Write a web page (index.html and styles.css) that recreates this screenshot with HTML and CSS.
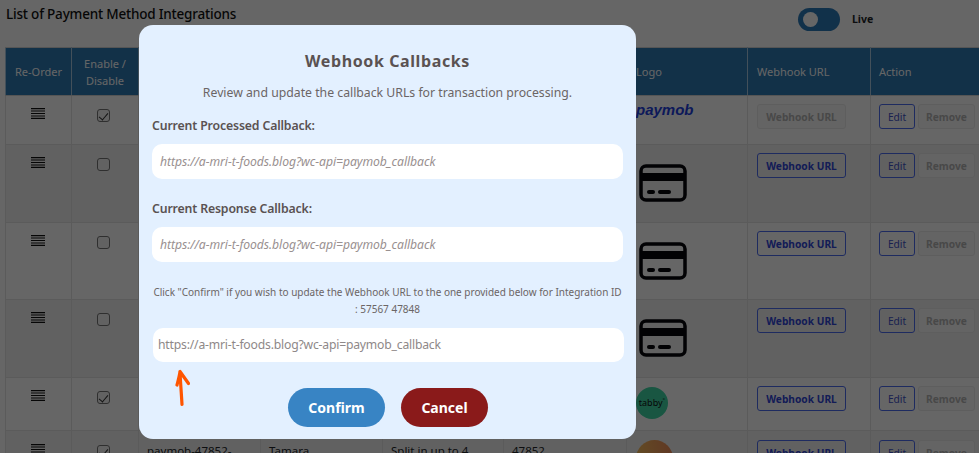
FILE: index.html
```html
<!DOCTYPE html>
<html lang="en">
<head>
    <meta charset="UTF-8">
    <title>Payment Method Integrations</title>
    <link rel="stylesheet" href="styles.css">
</head>
<body>
<section class="page">
    <div class="top-bar">
        <h1>List of Payment Method Integrations</h1>
        <div class="live-switch">
            <span class="switch"><span class="knob"></span></span>
            <span class="live-label">Live</span>
        </div>
    </div>

    <table class="methods">
        <colgroup>
            <col class="c-order"><col class="c-enable"><col class="c-name"><col class="c-title"><col class="c-desc"><col class="c-id"><col class="c-logo"><col class="c-hook"><col class="c-action">
        </colgroup>
        <thead>
            <tr>
                <th class="center">Re-Order</th>
                <th class="center">Enable / Disable</th>
                <th></th>
                <th></th>
                <th></th>
                <th></th>
                <th>Logo</th>
                <th>Webhook URL</th>
                <th>Action</th>
            </tr>
        </thead>
        <tbody>
            <tr class="row-a">
                <td class="center"><svg class="burger" viewBox="0 0 14 11"><path d="M0 .6H14M0 3H14M0 5.500H14M0 8H14M0 10.400H14" stroke="#111" stroke-width="1.200"/></svg></td>
                <td class="center"><span class="check on"></span></td>
                <td></td><td></td><td></td><td></td>
                <td><span class="paymob">paymob</span></td>
                <td><button class="btn hook off">Webhook URL</button></td>
                <td class="actions"><button class="btn edit">Edit</button><button class="btn remove">Remove</button></td>
            </tr>
            <tr class="row-b">
                <td class="center"><svg class="burger" viewBox="0 0 14 11"><path d="M0 .6H14M0 3H14M0 5.500H14M0 8H14M0 10.400H14" stroke="#111" stroke-width="1.200"/></svg></td>
                <td class="center"><span class="check"></span></td>
                <td></td><td></td><td></td><td></td>
                <td><svg class="card" viewBox="0 0 48 38"><rect x="2" y="2" width="44" height="34" rx="5" fill="none" stroke="#05060c" stroke-width="3.500"/><rect x="3" y="9" width="42" height="8" fill="#05060c"/><rect x="8" y="26" width="8" height="4" rx="2" fill="#05060c"/><rect x="19" y="26" width="13" height="4" rx="2" fill="#05060c"/></svg></td>
                <td><button class="btn hook">Webhook URL</button></td>
                <td class="actions"><button class="btn edit">Edit</button><button class="btn remove">Remove</button></td>
            </tr>
            <tr class="row-c">
                <td class="center"><svg class="burger" viewBox="0 0 14 11"><path d="M0 .6H14M0 3H14M0 5.500H14M0 8H14M0 10.400H14" stroke="#111" stroke-width="1.200"/></svg></td>
                <td class="center"><span class="check"></span></td>
                <td></td><td></td><td></td><td></td>
                <td><svg class="card" viewBox="0 0 48 38"><rect x="2" y="2" width="44" height="34" rx="5" fill="none" stroke="#05060c" stroke-width="3.500"/><rect x="3" y="9" width="42" height="8" fill="#05060c"/><rect x="8" y="26" width="8" height="4" rx="2" fill="#05060c"/><rect x="19" y="26" width="13" height="4" rx="2" fill="#05060c"/></svg></td>
                <td><button class="btn hook">Webhook URL</button></td>
                <td class="actions"><button class="btn edit">Edit</button><button class="btn remove">Remove</button></td>
            </tr>
            <tr class="row-d">
                <td class="center"><svg class="burger" viewBox="0 0 14 11"><path d="M0 .6H14M0 3H14M0 5.500H14M0 8H14M0 10.400H14" stroke="#111" stroke-width="1.200"/></svg></td>
                <td class="center"><span class="check"></span></td>
                <td></td><td></td><td></td><td></td>
                <td><svg class="card" viewBox="0 0 48 38"><rect x="2" y="2" width="44" height="34" rx="5" fill="none" stroke="#05060c" stroke-width="3.500"/><rect x="3" y="9" width="42" height="8" fill="#05060c"/><rect x="8" y="26" width="8" height="4" rx="2" fill="#05060c"/><rect x="19" y="26" width="13" height="4" rx="2" fill="#05060c"/></svg></td>
                <td><button class="btn hook">Webhook URL</button></td>
                <td class="actions"><button class="btn edit">Edit</button><button class="btn remove">Remove</button></td>
            </tr>
            <tr class="row-e">
                <td class="center"><svg class="burger" viewBox="0 0 14 11"><path d="M0 .6H14M0 3H14M0 5.500H14M0 8H14M0 10.400H14" stroke="#111" stroke-width="1.200"/></svg></td>
                <td class="center"><span class="check on"></span></td>
                <td></td><td></td><td></td><td></td>
                <td><span class="tabby">tabby<sup>°</sup></span></td>
                <td><button class="btn hook">Webhook URL</button></td>
                <td class="actions"><button class="btn edit">Edit</button><button class="btn remove">Remove</button></td>
            </tr>
            <tr class="row-f">
                <td class="center"><svg class="burger" viewBox="0 0 14 11"><path d="M0 .6H14M0 3H14M0 5.500H14M0 8H14M0 10.400H14" stroke="#111" stroke-width="1.200"/></svg></td>
                <td class="center"><span class="check on"></span></td>
                <td><span class="cell-text">paymob-47852-</span></td>
                <td><span class="cell-text">Tamara</span></td>
                <td><span class="cell-text">Split in up to 4</span></td>
                <td><span class="cell-text">47852</span></td>
                <td><span class="tamara"></span></td>
                <td><button class="btn hook">Webhook URL</button></td>
                <td class="actions"><button class="btn edit">Edit</button><button class="btn remove">Remove</button></td>
            </tr>
        </tbody>
    </table>
</section>

<div class="overlay">
    <div class="modal">
        <h2>Webhook Callbacks</h2>
        <p class="intro">Review and update the callback URLs for transaction processing.</p>

        <label class="field-label">Current Processed Callback:</label>
        <div class="url-box current">https://a-mri-t-foods.blog?wc-api=paymob_callback</div>

        <label class="field-label second">Current Response Callback:</label>
        <div class="url-box current">https://a-mri-t-foods.blog?wc-api=paymob_callback</div>

        <p class="note">Click "Confirm" if you wish to update the Webhook URL to the one provided below for Integration ID : 57567 47848</p>

        <div class="url-box new">https://a-mri-t-foods.blog?wc-api=paymob_callback</div>

        <div class="modal-actions">
            <button class="pill confirm">Confirm</button>
            <button class="pill cancel">Cancel</button>
        </div>

        <svg class="arrow" viewBox="0 0 16 38"><path d="M8 35.500C7.500 26 6.500 14 6 2.500M6 2.500C5.500 7 4 12 3 16M6 2.500C8.500 6 12 11 14.500 14.500" fill="none" stroke="#ff5500" stroke-width="3.200" stroke-linecap="round"/></svg>
    </div>
</div>
</body>
</html>
```

FILE: styles.css
```css
* {
    padding: 0;
    margin: 0;
    box-sizing: border-box;
}
html, body {
    height: 100%;
    overflow: hidden;
}
body {
    font-family: "Noto Sans", "Open Sans", sans-serif;
    background-color: white;
    color: #212529;
}
.page {
    padding: 0 0 0 5px;
}

/* top bar */
.top-bar {
    display: flex;
    align-items: flex-start;
    height: 47px;
}
.top-bar h1 {
    font-size: 13.500px;
    font-weight: 500;
    letter-spacing: -0.2px;
    line-height: 20px;
    margin: 4px 0 0 1px;
    width: 792px;
    color: #111;
}
.live-switch {
    display: flex;
    align-items: center;
    gap: 12px;
    margin-top: 8px;
}
.switch {
    display: block;
    width: 42px;
    height: 23px;
    border-radius: 12px;
    background-color: #2c7ab8;
    padding: 4px 0 0 5px;
}
.knob {
    display: block;
    width: 15px;
    height: 15px;
    border-radius: 50%;
    background-color: white;
}
.live-label {
    font-size: 10.500px;
    font-weight: 700;
    margin-top: -2px;
}

/* table */
.methods {
    table-layout: fixed;
    border-collapse: collapse;
    width: 974px;
    font-size: 11.500px;
}
.c-order { width: 66px; }
.c-enable { width: 67px; }
.c-name { width: 122px; }
.c-title { width: 122px; }
.c-desc { width: 121px; }
.c-id { width: 123px; }
.c-logo { width: 121px; }
.c-hook { width: 123px; }
.c-action { width: 109px; }
.methods th {
    height: 48px;
    background-color: #2d7ab5;
    color: white;
    font-weight: 400;
    font-size: 11px;
    line-height: 17px;
    text-align: left;
    padding: 0 9px;
    border: 1px solid #a9c9e0;
    border-top-color: #d5d5d5;
    border-bottom-color: #d5d5d5;
}
.methods th:last-child {
    padding-left: 8px;
}
.methods th.center {
    padding: 0 4px;
}
.methods td {
    vertical-align: top;
    padding: 8px 9px 0 8px;
    border: 1px solid #e4e4e4;
    background-color: white;
}
.methods th.center,
.methods td.center {
    text-align: center;
}
.methods td.actions {
    padding-left: 8px;
    padding-right: 0;
    white-space: nowrap;
}
.row-a td { height: 49px; }
.row-b td { height: 78px; }
.row-c td { height: 77px; }
.row-d td { height: 78px; }
.row-e td { height: 53px; }
.row-f td { height: 60px; }
.row-f td {
    padding-top: 9px;
}
.row-b td, .row-d td, .row-f td {
    background-color: #f2f2f2;
}
.cell-text {
    display: block;
    margin-top: 3px;
}
.burger {
    display: inline-block;
    vertical-align: top;
    width: 14px;
    height: 11px;
    margin-top: 4px;
}
.check {
    display: inline-block;
    vertical-align: top;
    width: 13px;
    height: 13px;
    margin-top: 5px;
    margin-right: 3px;
    border: 1px solid #767676;
    border-radius: 3px;
    background-color: #f5f5f5;
    position: relative;
}
.check.on::after {
    content: "";
    position: absolute;
    left: 3.500px;
    top: 1px;
    width: 4px;
    height: 8px;
    border: solid #333;
    border-width: 0 1.500px 1.500px 0;
    transform: rotate(40deg);
}
.card {
    display: block;
    width: 48px;
    height: 38px;
    margin: 11px 0 0 4px;
}
.paymob {
    display: block;
    margin: -1px 0 0 1px;
    font-family: "Liberation Sans", sans-serif;
    font-weight: 700;
    font-style: italic;
    font-size: 15px;
    line-height: 14px;
    color: #1e3fe0;
}
.tabby {
    display: block;
    width: 32px;
    height: 32px;
    margin: 1px 0 0 1px;
    border-radius: 50%;
    background-color: #3fd6a6;
    color: #111;
    font-size: 9px;
    line-height: 32px;
    text-align: center;
}
.tabby sup {
    font-size: 6px;
    line-height: 0;
}
.tamara {
    display: block;
    width: 37px;
    height: 37px;
    margin-left: 1px;
    border-radius: 50%;
    background-image: linear-gradient(80deg, #f7c25a, #f08a5a);
}
.btn {
    font-family: "Noto Sans", sans-serif;
    font-size: 10.200px;
    height: 25px;
    border-radius: 3px;
    background-color: transparent;
    cursor: pointer;
    vertical-align: top;
}
.hook {
    width: 89px;
    margin-left: 1px;
    font-weight: 700;
    color: #3047d8;
    border: 1px solid #4c6cf0;
}
.hook.off {
    color: #b5b5b5;
    background-color: #fafafa;
    border-color: #eaeaea;
}
.edit {
    width: 36px;
    color: #3f52c8;
    border: 1px solid #4c6cf0;
}
.remove {
    width: 57px;
    margin-left: 3px;
    font-weight: 700;
    color: #b5b5b5;
    background-color: #fafafa;
    border: 1px solid #eaeaea;
}

/* popup */
.overlay {
    position: fixed;
    top: 0;
    left: 0;
    right: 0;
    bottom: 0;
    background-color: rgba(0, 0, 0, 0.6);
    padding: 25px 0 0 139px;
}
.modal {
    position: relative;
    width: 497px;
    height: 414px;
    padding: 25px 13px 0;
    background-color: #e3f0ff;
    border-radius: 14px;
    color: #5a5252;
}
.modal h2 {
    font-size: 16px;
    font-weight: 700;
    letter-spacing: 0.6px;
    line-height: 22px;
    text-align: center;
}
.intro {
    font-size: 12.250px;
    line-height: 18px;
    margin-top: 12px;
    text-align: center;
    color: #6b6565;
}
.field-label {
    display: block;
    font-size: 12.300px;
    font-weight: 600;
    letter-spacing: -0.15px;
    line-height: 18px;
    margin-top: 15px;
}
.field-label.second {
    margin-top: 21px;
}
.url-box {
    height: 35px;
    line-height: 35px;
    background-color: white;
    border-radius: 10px;
    padding-left: 8px;
    font-size: 12.200px;
    letter-spacing: -0.06px;
    color: #999090;
    margin-top: 9px;
}
.url-box.current {
    font-style: italic;
}
.url-box.new {
    height: 34px;
    line-height: 34px;
    margin: 10px -1px 0 1px;
    padding-left: 5px;
    letter-spacing: -0.2px;
    color: #8e8888;
}
.note {
    font-size: 10px;
    line-height: 17px;
    margin-top: 22px;
    text-align: center;
    color: #6b6565;
}
.modal-actions {
    display: flex;
    justify-content: center;
    gap: 16px;
    margin-top: 26px;
    padding-left: 1px;
}
.pill {
    height: 39px;
    border: none;
    border-radius: 20px;
    color: white;
    font-family: "Noto Sans", sans-serif;
    font-size: 14px;
    font-weight: 700;
    cursor: pointer;
}
.confirm {
    width: 97px;
    background-color: #3884c4;
}
.cancel {
    width: 87px;
    background-color: #8a1a1a;
}
.arrow {
    position: absolute;
    left: 35px;
    top: 344px;
    width: 16px;
    height: 38px;
}
```
